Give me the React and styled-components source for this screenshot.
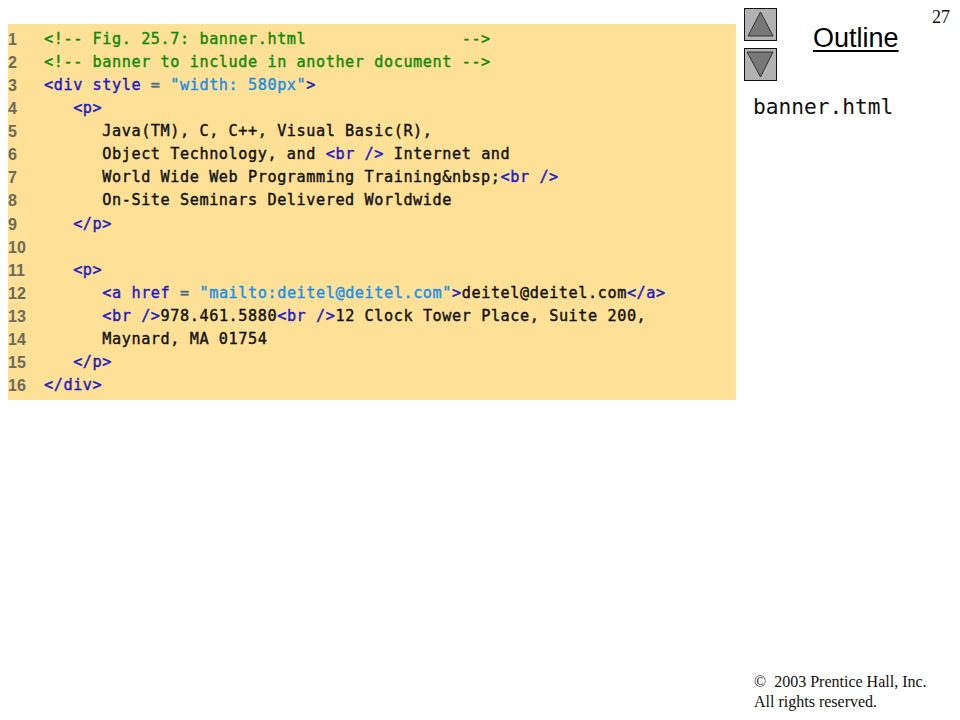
import React from "react";
import styled, { createGlobalStyle } from "styled-components";

const GlobalStyle = createGlobalStyle`
  html, body {
    margin: 0;
    padding: 0;
    background: #fff;
  }
`;

const Page = styled.div`
  display: flex;
  width: 960px;
  height: 720px;
  overflow: hidden;
`;

const CodePanel = styled.div`
  align-self: flex-start;
  box-sizing: border-box;
  width: 728px;
  height: 376px;
  margin: 24px 0 0 8px;
  padding: 4px 0 0;
  background: #fee096;
`;

const CodeRow = styled.div`
  display: flex;
  height: 23.07px;
  line-height: 23px;
`;

const LineNumber = styled.span`
  width: 36px;
  font-family: "Liberation Sans", Arial, sans-serif;
  font-size: 16px;
  font-weight: 700;
  color: #6b6b5c;
`;

const CodeText = styled.code`
  font-family: "DejaVu Sans Mono", monospace;
  font-size: 15.2px;
  font-weight: 400;
  letter-spacing: 0.57px;
  white-space: pre;
  color: #111;
  -webkit-text-stroke: 0.4px currentColor;
`;

const tokenColors = {
  comment: "#118a0c",
  tag: "#1c1cc4",
  value: "#2090e4",
  op: "#4a6a90",
};

const Token = styled.span`
  color: ${(p) => tokenColors[p.$kind]};
`;

const Sidebar = styled.aside`
  flex: 1;
  display: flex;
  flex-direction: column;
  padding: 8px 10px 0 8px;
`;

const Header = styled.div`
  display: flex;
  align-items: flex-start;
`;

const ArrowColumn = styled.div`
  display: flex;
  flex-direction: column;
  gap: 7px;
`;

const ArrowButton = styled.svg`
  display: block;
  width: 33px;
  height: 33px;
`;

const OutlineTitle = styled.div`
  margin: 14px 0 0 36px;
  font-family: "Liberation Sans", Arial, sans-serif;
  font-size: 27px;
  line-height: 32px;
  color: #000;
  text-decoration: underline;
  text-decoration-thickness: 2px;
  text-underline-offset: 3px;
`;

const PageNumber = styled.div`
  margin: 0 0 0 auto;
  font-family: "Liberation Serif", "Times New Roman", serif;
  font-size: 18px;
  line-height: 18px;
  color: #111;
`;

const FileName = styled.div`
  margin: 13px 0 0 9px;
  font-family: "DejaVu Sans Mono", monospace;
  font-size: 21.2px;
  line-height: 25px;
  color: #111;
`;

const Copyright = styled.footer`
  margin-top: auto;
  padding: 0 0 8px 10px;
  font-family: "Liberation Serif", "Times New Roman", serif;
  font-size: 16px;
  line-height: 20px;
  color: #111;
  white-space: pre;
`;

const t = (kind, text) => <Token $kind={kind}>{text}</Token>;

const lines = [
  [t("comment", "<!-- Fig. 25.7: banner.html                -->")],
  [t("comment", "<!-- banner to include in another document -->")],
  [t("tag", "<div style "), t("op", "="), " ", t("value", '"width: 580px"'), t("tag", ">")],
  ["   ", t("tag", "<p>")],
  ["      Java(TM), C, C++, Visual Basic(R),"],
  ["      Object Technology, and ", t("tag", "<br />"), " Internet and"],
  ["      World Wide Web Programming Training&nbsp;", t("tag", "<br />")],
  ["      On-Site Seminars Delivered Worldwide"],
  ["   ", t("tag", "</p>")],
  [""],
  ["   ", t("tag", "<p>")],
  ["      ", t("tag", "<a href "), t("op", "="), " ", t("value", '"mailto:deitel@deitel.com"'), t("tag", ">"), "deitel@deitel.com", t("tag", "</a>")],
  ["      ", t("tag", "<br />"), "978.461.5880", t("tag", "<br />"), "12 Clock Tower Place, Suite 200,"],
  ["      Maynard, MA 01754"],
  ["   ", t("tag", "</p>")],
  [t("tag", "</div>")],
];

export default function App() {
  return (
    <Page>
      <GlobalStyle />
      <CodePanel>
        {lines.map((parts, i) => (
          <CodeRow key={i}>
            <LineNumber>{i + 1}</LineNumber>
            <CodeText>
              {parts.map((part, j) => (
                <React.Fragment key={j}>{part}</React.Fragment>
              ))}
            </CodeText>
          </CodeRow>
        ))}
      </CodePanel>
      <Sidebar>
        <Header>
          <ArrowColumn>
            <ArrowButton viewBox="0 0 33 33">
              <rect x="0.5" y="0.5" width="32" height="32" fill="#b2b2b2" stroke="#111" />
              <polygon points="16.5,4 29,28 4,28" fill="#777" stroke="#333" />
            </ArrowButton>
            <ArrowButton viewBox="0 0 33 33">
              <rect x="0.5" y="0.5" width="32" height="32" fill="#b2b2b2" stroke="#111" />
              <polygon points="3,4 29,4 16.5,29" fill="#777" stroke="#333" />
            </ArrowButton>
          </ArrowColumn>
          <OutlineTitle>Outline</OutlineTitle>
          <PageNumber>27</PageNumber>
        </Header>
        <FileName>banner.html</FileName>
        <Copyright>{"\u00a9  2003 Prentice Hall, Inc.\nAll rights reserved."}</Copyright>
      </Sidebar>
    </Page>
  );
}
